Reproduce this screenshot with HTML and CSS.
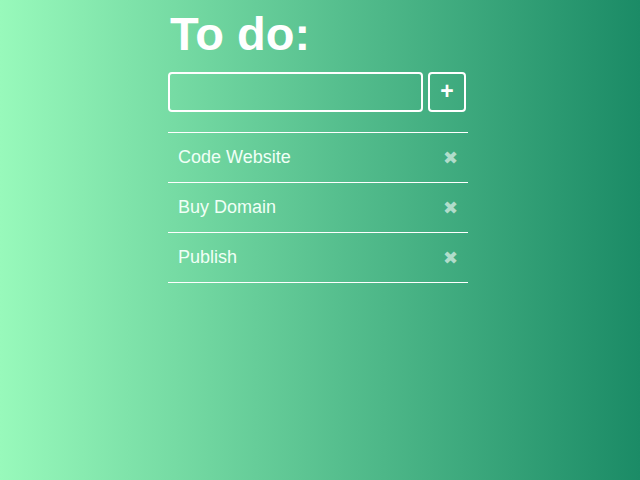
FILE: index.html
```html
<!DOCTYPE html>
<html>
<head>
<meta charset="utf-8">
<link rel="stylesheet" href="styles.css">
</head>
<body>
<div class="app">
  <h1 class="title">To do:</h1>
  <div class="add-row">
    <input class="add-input" type="text">
    <button class="add-btn">+</button>
  </div>
  <ul class="list">
    <li class="item"><span class="item-text">Code Website</span><span class="del">✖</span></li>
    <li class="item"><span class="item-text">Buy Domain</span><span class="del">✖</span></li>
    <li class="item"><span class="item-text">Publish</span><span class="del">✖</span></li>
  </ul>
</div>
</body>
</html>
```
FILE: styles.css
```css
html, body {
  margin: 0;
  height: 100%;
}
body {
  background: linear-gradient(to right, #98f9bb, #1b8b66);
  font-family: "Liberation Sans", Arial, sans-serif;
  color: #fff;
}
.app {
  width: 300px;
  margin-left: 168px;
  padding-top: 8px;
}
.title {
  margin: 0;
  font-size: 47px;
  font-weight: bold;
  line-height: 52px;
  padding-left: 2px;
  color: #fff;
}
.add-row {
  display: flex;
  gap: 5px;
  margin-top: 12px;
}
.add-input {
  width: 255px;
  height: 40px;
  box-sizing: border-box;
  background: transparent;
  border: 2px solid #fff;
  border-radius: 4px;
  outline: none;
}
.add-btn {
  width: 38px;
  height: 40px;
  box-sizing: border-box;
  background: transparent;
  border: 2px solid #fff;
  border-radius: 4px;
  color: #fff;
  font-family: "Liberation Sans", Arial, sans-serif;
  font-size: 23px;
  font-weight: bold;
  line-height: 1;
  padding: 0 0 2px;
}
.list {
  list-style: none;
  margin: 20px 0 0;
  padding: 0;
  border-top: 1px solid #fff;
}
.item {
  display: flex;
  justify-content: space-between;
  align-items: center;
  height: 49px;
  border-bottom: 1px solid #fff;
  padding: 0 10px;
  font-size: 18px;
  color: #f0fff6;
}
.del {
  color: rgba(255, 255, 255, 0.6);
  font-family: "DejaVu Sans", sans-serif;
  font-size: 18px;
}
```
